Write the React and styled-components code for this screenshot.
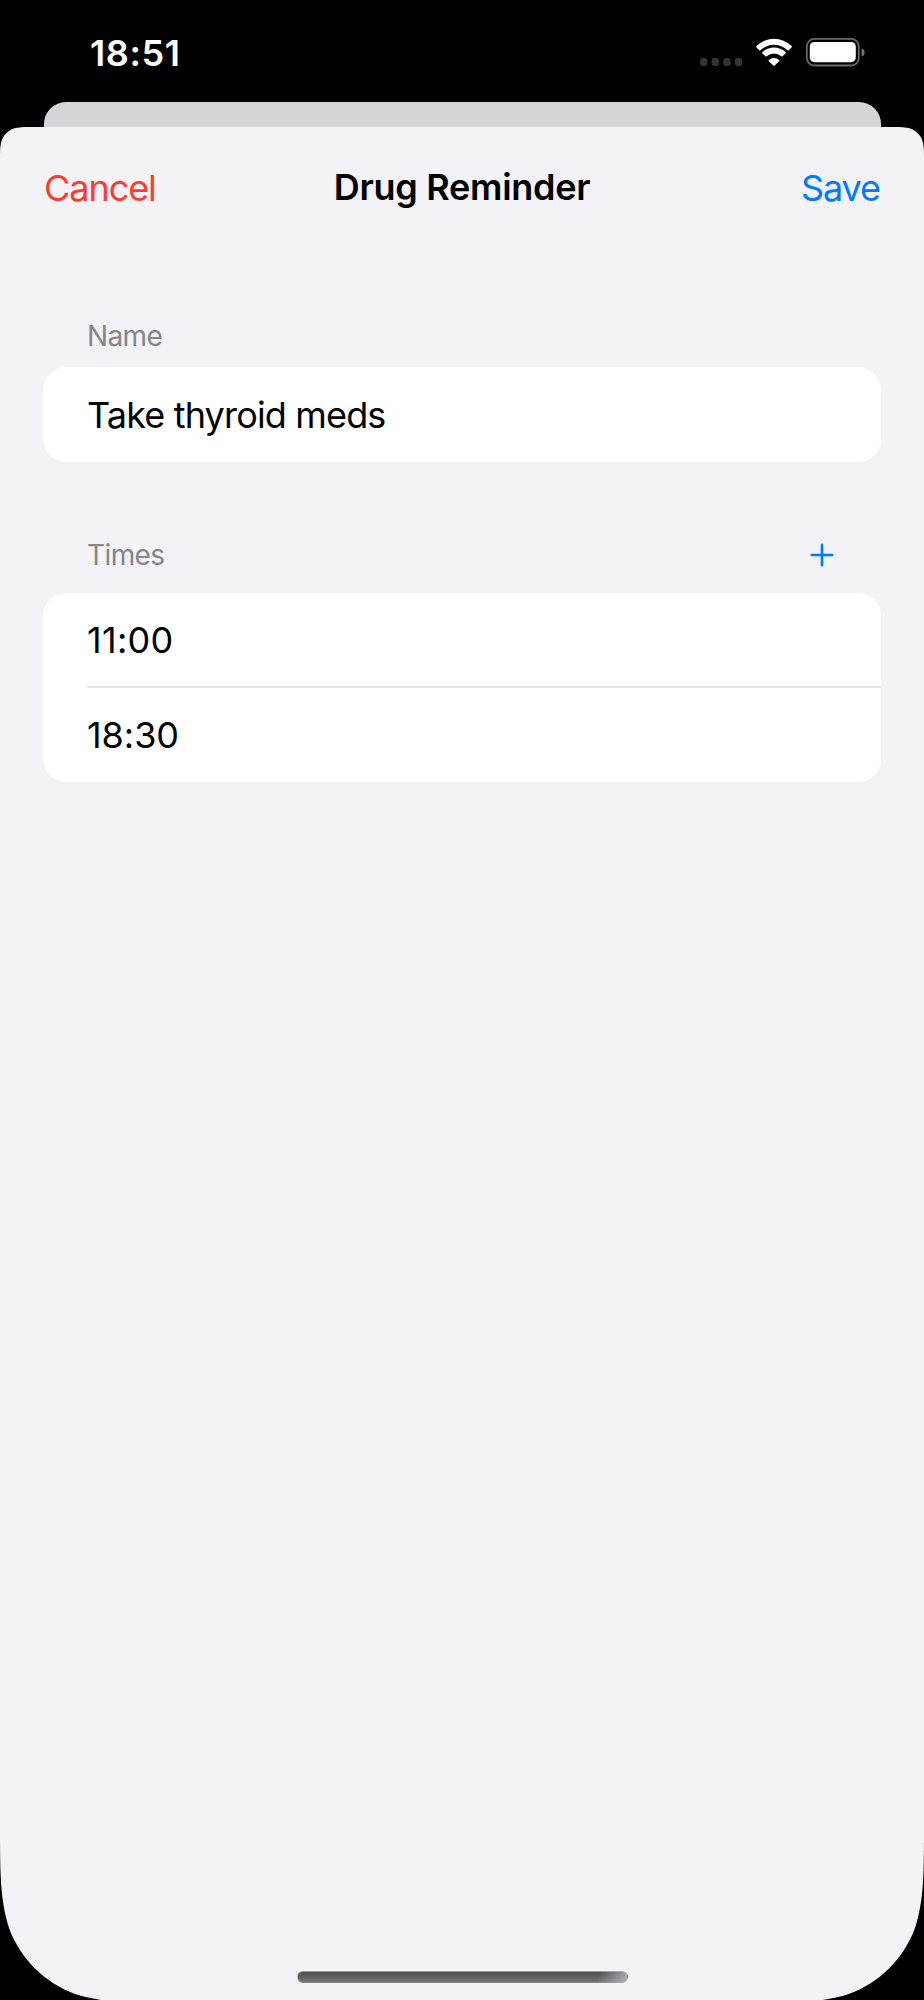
import React from 'react';
import styled, { createGlobalStyle } from 'styled-components';

const GlobalStyle = createGlobalStyle`
  * { box-sizing: border-box; }
  body {
    margin: 0;
    background: #000;
    font-family: Inter, "Liberation Sans", sans-serif;
  }
`;

// Sheet outline with continuous (superelliptic) corners.
const sheetOutline = (w, h, top, bottom) => {
  const corner = (x, y, dx, dy, r) => {
    const p = (a, b) => `${(x + dx * a * r).toFixed(2)} ${(y + dy * b * r).toFixed(2)}`;
    const pts = [
      [0, 1.528665], [0, 1.088493], [0, 0.868407], [0.074911, 0.631494],
      [0.16906, 0.372824], [0.372824, 0.16906], [0.631494, 0.074911],
      [0.868407, 0], [1.088493, 0], [1.528665, 0],
    ];
    if (dx * dy < 0) pts.reverse();
    const [start, ...rest] = pts.map(([a, b]) => p(a, b));
    return `L ${start} C ${rest.join(' ')}`;
  };
  const d = [
    corner(0, 0, 1, 1, top),
    corner(w, 0, -1, 1, top),
    corner(w, h, -1, -1, bottom),
    corner(0, h, 1, -1, bottom),
  ].join(' ');
  return `path("M${d.slice(1)} Z")`;
};

const Screen = styled.div`
  width: 924px;
  height: 2000px;
  display: flex;
  flex-direction: column;
  background: #000;
  overflow: hidden;
`;

const StatusBar = styled.header`
  height: 101.5px;
  flex: none;
  display: flex;
  justify-content: space-between;
  padding: 29px 59px 0 90px;
`;

const Clock = styled.time`
  font-size: 36px;
  line-height: 48px;
  font-weight: 600;
  letter-spacing: 0.6px;
  color: #fff;
`;

const StatusIcons = styled.div`
  display: flex;
  height: 48px;
  align-items: center;

  svg:nth-child(2) {
    margin: 0 13px 0 12px;
  }
`;

const BackSheet = styled.div`
  flex: none;
  height: 25.5px;
  margin: 0 43.5px;
  border-radius: 22px 22px 0 0;
  background: #d5d4d9;
`;

const Sheet = styled.main`
  flex: 1;
  display: flex;
  flex-direction: column;
  background: #f2f2f7;
  clip-path: ${sheetOutline(924, 1876, 21.6, 119)};
`;

const NavBar = styled.nav`
  height: 121px;
  flex: none;
  display: grid;
  grid-template-columns: 1fr auto 1fr;
  align-items: center;
  padding: 0 44px;
`;

const NavButton = styled.button`
  border: 0;
  padding: 0;
  background: none;
  font: 400 36px/48px Inter, "Liberation Sans", sans-serif;
  letter-spacing: -1.05px;
  color: ${(p) => p.$color};
  justify-self: ${(p) => p.$side};
`;

const Title = styled.h1`
  margin: 0 0 2px;
  font-size: 36px;
  line-height: 48px;
  font-weight: 600;
  letter-spacing: -0.27px;
`;

const Section = styled.section`
  margin: ${(p) => p.$top} 43px 0;
`;

const SectionHeader = styled.div`
  display: flex;
  justify-content: space-between;
  align-items: center;
  height: 40px;
  padding: 0 47px 0 44px;
  margin-bottom: ${(p) => p.$gap};
`;

const SectionLabel = styled.h2`
  margin: 0;
  font-size: 28px;
  line-height: 40px;
  font-weight: 400;
  letter-spacing: -0.6px;
  color: #86858b;
`;

const AddButton = styled.button`
  display: flex;
  border: 0;
  padding: 0;
  background: none;
`;

const Card = styled.div`
  border-radius: 23px;
  background: #fff;
  padding-left: 44px;
  overflow: hidden;
`;

const Row = styled.div`
  height: 95px;
  display: flex;
  align-items: center;
  font-size: 36px;
  line-height: 48px;
  letter-spacing: ${(p) => p.$tracking};
  color: #000;

  & + & {
    height: 96px;
    border-top: 2px solid #e5e5e7;
    margin-top: -1.5px;
  }
`;

const HomeIndicator = styled.div`
  width: 331px;
  height: 12px;
  margin: auto auto 17px 297px;
  border-radius: 6px;
  border: 1px solid rgba(190, 190, 195, 0.5);
  background:
    linear-gradient(105deg, transparent 91%, rgba(190, 190, 192, 0.8) 100%),
    linear-gradient(#4c4c4d, #757576);
`;

const SignalDots = () => (
  <svg width="44" height="48" viewBox="0 0 44 48" fill="#343435">
    {[0, 11.6, 23.2, 34.8].map((x) => (
      <rect key={x} x={x} y="29" width="7.4" height="8" rx="3" />
    ))}
  </svg>
);

const Wifi = () => (
  <svg width="36" height="48" viewBox="0 0 36 48" fill="#fff">
    <path d="M.4 16.9A25.5 25.5 0 0 1 35.6 16.9Q36.3 17.6 35.6 18.3L32.8 21.2Q32.2 21.8 31.5 21.2A19.6 19.6 0 0 0 4.5 21.2Q3.8 21.8 3.2 21.2L.4 18.3Q-.3 17.6 .4 16.9Z" />
    <path d="M6.5 23A16.7 16.7 0 0 1 29.5 23Q30.2 23.7 29.5 24.4L26.6 27.3Q26 27.9 25.3 27.3A11 11 0 0 0 10.7 27.3Q10 27.9 9.4 27.3L6.5 24.4Q5.8 23.7 6.5 23Z" />
    <path d="M12.8 30.9A7.7 7.7 0 0 1 23.2 30.9Q23.9 31.5 23.2 32.2L18.7 36.6Q18 37.2 17.3 36.6L12.8 32.2Q12.1 31.5 12.8 30.9Z" />
  </svg>
);

const Battery = () => (
  <svg width="60" height="48" viewBox="0 0 60 48">
    <rect x="1.8" y="9.9" width="52" height="26.6" rx="7.6" fill="none" stroke="#69696a" strokeWidth="1.8" />
    <rect x="4.8" y="13" width="46" height="20.2" rx="4.6" fill="#fff" />
    <path d="M56.6 19.2c2 .8 3 2.3 3 4.2s-1 3.4-3 4.2z" fill="#777778" />
  </svg>
);

const Plus = () => (
  <svg width="24" height="24" viewBox="0 0 24 24" stroke="#007aff" strokeWidth="2.6" strokeLinecap="round">
    <path d="M12 1.7v20.6M1.7 12h20.6" />
  </svg>
);

export default function App() {
  return (
    <Screen>
      <GlobalStyle />
      <StatusBar>
        <Clock>18:51</Clock>
        <StatusIcons>
          <SignalDots />
          <Wifi />
          <Battery />
        </StatusIcons>
      </StatusBar>
      <BackSheet />
      <Sheet>
        <NavBar>
          <NavButton $color="#ff3b30" $side="start">Cancel</NavButton>
          <Title>Drug Reminder</Title>
          <NavButton $color="#007aff" $side="end">Save</NavButton>
        </NavBar>
        <Section $top="68px">
          <SectionHeader $gap="11px">
            <SectionLabel>Name</SectionLabel>
          </SectionHeader>
          <Card>
            <Row $tracking="-0.83px">Take thyroid meds</Row>
          </Card>
        </Section>
        <Section $top="73px">
          <SectionHeader $gap="17.5px">
            <SectionLabel>Times</SectionLabel>
            <AddButton aria-label="Add time">
              <Plus />
            </AddButton>
          </SectionHeader>
          <Card>
            <Row $tracking="0.3px">11:00</Row>
            <Row $tracking="-0.05px">18:30</Row>
          </Card>
        </Section>
        <HomeIndicator />
      </Sheet>
    </Screen>
  );
}
